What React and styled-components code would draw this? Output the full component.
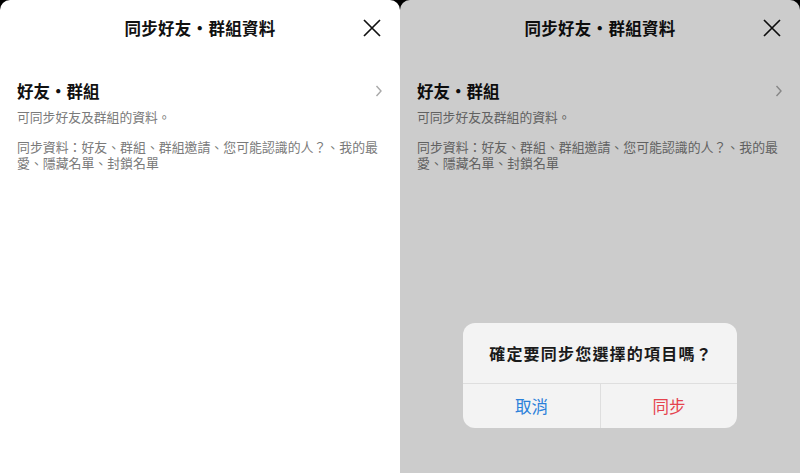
import styled, { createGlobalStyle } from "styled-components";

const GlobalStyle = createGlobalStyle`
  html, body {
    margin: 0;
    padding: 0;
    background: #000;
  }
  body {
    font-family: "Noto Sans CJK TC", "Noto Sans", sans-serif;
  }
`;

const Page = styled.div`
  width: 800px;
  height: 473px;
  display: flex;
  overflow: hidden;
`;

const Screen = styled.div`
  position: relative;
  width: 400px;
  height: 473px;
  background: #fff;
  border-radius: 10px 10px 0 0;
  overflow: hidden;
`;

const Header = styled.div`
  height: 56px;
  display: flex;
  align-items: center;
  justify-content: center;
  position: relative;
`;

const Title = styled.h1`
  margin: 0;
  font-size: 16.5px;
  font-weight: 700;
  color: #111;
  letter-spacing: 0.3px;
`;

const CloseButton = styled.button`
  position: absolute;
  right: 19px;
  top: 19px;
  width: 18px;
  height: 18px;
  padding: 0;
  border: none;
  background: none;
  display: flex;
`;

const Section = styled.div`
  padding: 23px 17px 0 17px;
`;

const SectionRow = styled.div`
  display: flex;
  align-items: center;
  justify-content: space-between;
`;

const SectionTitle = styled.h2`
  margin: 0;
  font-size: 16.5px;
  line-height: 24px;
  font-weight: 700;
  color: #111;
`;

const Subtitle = styled.p`
  margin: 5px 0 0 0;
  font-size: 12.8px;
  line-height: 18px;
  color: #7a7a7a;
`;

const Description = styled.p`
  margin: 13px 0 0 0;
  font-size: 12.9px;
  line-height: 15.5px;
  color: #7a7a7a;
`;

const Overlay = styled.div`
  position: absolute;
  inset: 0;
  background: rgba(0, 0, 0, 0.2);
  display: flex;
  align-items: flex-end;
  justify-content: center;
  padding-bottom: 45px;
  box-sizing: border-box;
`;

const Dialog = styled.div`
  width: 274px;
  background: #f3f3f3;
  border-radius: 12px;
  overflow: hidden;
`;

const DialogMessage = styled.div`
  height: 60px;
  display: flex;
  align-items: center;
  justify-content: center;
  font-size: 16px;
  font-weight: 700;
  color: #1a1a1a;
  letter-spacing: 1.2px;
  padding-left: 2px;
  border-bottom: 1px solid #dedede;
`;

const DialogActions = styled.div`
  display: grid;
  grid-template-columns: 1fr 1fr;
  height: 44px;
`;

const DialogButton = styled.button`
  border: none;
  background: none;
  font-family: inherit;
  font-size: 16.5px;
  color: ${(p) => (p.$danger ? "#e5434e" : "#2a80da")};
  border-left: ${(p) => (p.$danger ? "1px solid #dedede" : "none")};
  padding: 0 0 1px 0;
`;

const CloseIcon = () => (
  <svg width="18" height="18" viewBox="0 0 18 18">
    <path d="M1 1 L17 17 M17 1 L1 17" stroke="#111" strokeWidth="1.7" fill="none" />
  </svg>
);

const Chevron = () => (
  <svg width="8" height="12" viewBox="0 0 8 12">
    <path d="M1.5 1 L6 6 L1.5 11" stroke="#a9a9a9" strokeWidth="1.4" fill="none" />
  </svg>
);

const SyncScreen = ({ showDialog }) => (
  <Screen>
    <Header>
      <Title>同步好友・群組資料</Title>
      <CloseButton>
        <CloseIcon />
      </CloseButton>
    </Header>
    <Section>
      <SectionRow>
        <SectionTitle>好友・群組</SectionTitle>
        <Chevron />
      </SectionRow>
      <Subtitle>可同步好友及群組的資料。</Subtitle>
      <Description>
        同步資料：好友、群組、群組邀請、您可能認識的人？、我的最愛、隱藏名單、封鎖名單
      </Description>
    </Section>
    {showDialog && (
      <Overlay>
        <Dialog>
          <DialogMessage>確定要同步您選擇的項目嗎？</DialogMessage>
          <DialogActions>
            <DialogButton>取消</DialogButton>
            <DialogButton $danger>同步</DialogButton>
          </DialogActions>
        </Dialog>
      </Overlay>
    )}
  </Screen>
);

export default function App() {
  return (
    <Page>
      <GlobalStyle />
      <SyncScreen />
      <SyncScreen showDialog />
    </Page>
  );
}
